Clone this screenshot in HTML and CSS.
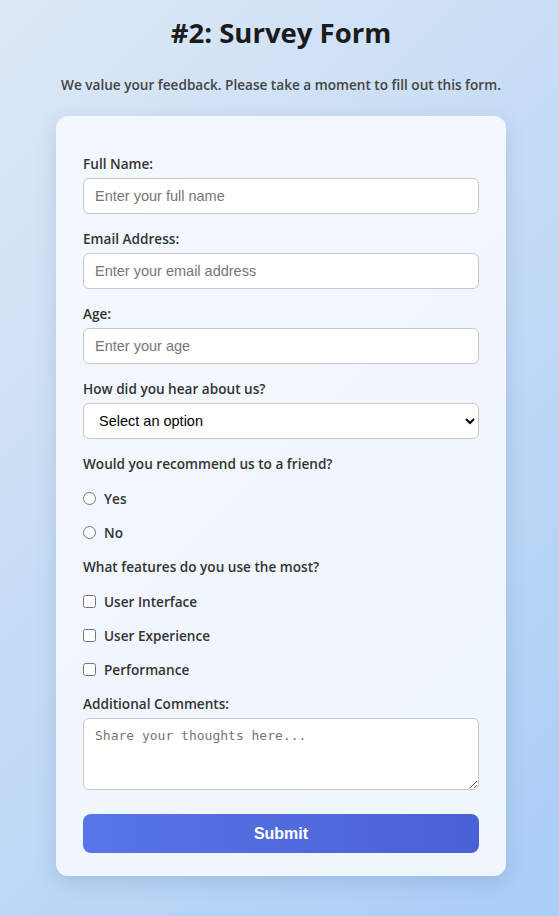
FILE: index.html
```html
<!DOCTYPE html>
<html lang="en">
<head>
<meta charset="utf-8">
<title>Survey Form</title>
<link rel="stylesheet" href="styles.css">
</head>
<body>
<h1 class="title">#2: Survey Form</h1>
<p class="subtitle">We value your feedback. Please take a moment to fill out this form.</p>
<form class="card">
  <div class="group">
    <label class="label" for="name">Full Name:</label>
    <input class="field" id="name" type="text" placeholder="Enter your full name">
  </div>
  <div class="group">
    <label class="label" for="email">Email Address:</label>
    <input class="field" id="email" type="email" placeholder="Enter your email address">
  </div>
  <div class="group">
    <label class="label" for="age">Age:</label>
    <input class="field" id="age" type="number" placeholder="Enter your age">
  </div>
  <div class="group">
    <label class="label" for="source">How did you hear about us?</label>
    <select class="field select" id="source">
      <option>Select an option</option>
      <option>Friend</option>
      <option>Social Media</option>
    </select>
  </div>
  <div class="group">
    <span class="label">Would you recommend us to a friend?</span>
    <label class="option"><input type="radio" name="rec" class="check"> Yes</label>
    <label class="option"><input type="radio" name="rec" class="check"> No</label>
  </div>
  <div class="group">
    <span class="label">What features do you use the most?</span>
    <label class="option"><input type="checkbox" class="check"> User Interface</label>
    <label class="option"><input type="checkbox" class="check"> User Experience</label>
    <label class="option"><input type="checkbox" class="check"> Performance</label>
  </div>
  <div class="group">
    <label class="label" for="comments">Additional Comments:</label>
    <textarea class="field area" id="comments" placeholder="Share your thoughts here..."></textarea>
  </div>
  <button class="submit" type="button">Submit</button>
</form>
</body>
</html>
```
FILE: styles.css
```css
* { box-sizing: border-box; }
html, body { height: 100%; }
body {
  margin: 0;
  padding: 13px 0 0 3px;
  font-family: "Open Sans", "Noto Sans", sans-serif;
  color: #333;
  background: linear-gradient(135deg, #dce9f6 0%, #c6dcf5 45%, #a9cdf6 100%);
  min-height: 916px;
}
.title {
  margin: 0;
  text-align: center;
  font-size: 27.5px;
  font-weight: 700;
  line-height: 40px;
  color: #1b1b1b;
}
.subtitle {
  margin: 22px 0 0;
  text-align: center;
  font-size: 13.6px;
  font-weight: 600;
  line-height: 20px;
  color: #444;
}
.card {
  width: 450px;
  margin: 21px auto 0;
  padding: 38px 27px 23px;
  background: rgba(245, 249, 254, 0.92);
  border-radius: 12px;
  box-shadow: 0 6px 20px rgba(60, 90, 140, 0.18);
  display: flex;
  flex-direction: column;
}
.group {
  display: flex;
  flex-direction: column;
  margin-bottom: 15px;
}
.label {
  font-size: 13.6px;
  font-weight: 600;
  line-height: 20px;
  color: #333;
  margin-bottom: 4px;
}
.field {
  width: 100%;
  height: 36px;
  border: 1px solid #c8c8c8;
  border-radius: 6px;
  padding: 0 11px;
  font-family: "Liberation Sans", Arial, sans-serif;
  font-size: 14.5px;
  color: #000;
  background: #fff;
}
.field::placeholder { color: #767676; }
.select { padding-left: 11px; }
.area {
  height: 72px;
  padding: 9px 11px;
  font-family: "DejaVu Sans Mono", "Liberation Mono", monospace;
  font-size: 13px;
  resize: vertical;
}
.option {
  display: flex;
  align-items: center;
  gap: 8px;
  height: 20px;
  margin-top: 10px;
  font-size: 13.6px;
  font-weight: 600;
  color: #333;
}
.option + .option { margin-top: 14px; }
.check {
  width: 13px;
  height: 13px;
  margin: 0;
}
.submit {
  margin-top: 9px;
  height: 39px;
  border: none;
  border-radius: 8px;
  background: linear-gradient(90deg, #5876e6 0%, #4a60d6 100%);
  color: #fff;
  font-family: "Liberation Sans", Arial, sans-serif;
  font-size: 16px;
  font-weight: 700;
}
```
